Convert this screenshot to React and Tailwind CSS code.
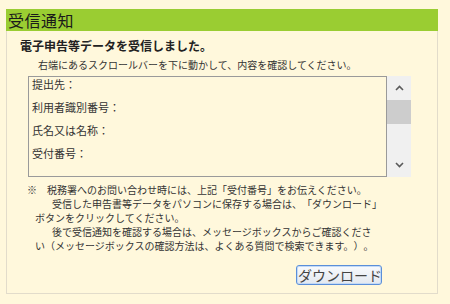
import React from 'react';

const FONT = "font-['Noto_Sans_CJK_JP','Noto_Sans',sans-serif] [text-spacing-trim:space-all]";

const FIELDS = ['提出先：', '利用者識別番号：', '氏名又は名称：', '受付番号：'];

function Chevron({ down }) {
  return (
    <svg width="9" height="6" viewBox="0 0 9 6" className={down ? 'rotate-180' : ''}>
      <path d="M1 5 L4.5 1.5 L8 5" fill="none" stroke="#5a5a5a" strokeWidth="1.6" />
    </svg>
  );
}

export default function App() {
  return (
    <div className={`w-[450px] h-[304px] bg-[#fff8dc] pt-[9px] pl-[6px] text-[#222] ${FONT}`}>
      <div className="w-[432px]">
        {/* header */}
        <div className="h-[22px] bg-[#9acd32] flex items-center pl-[2px] text-[16px] leading-none tracking-[0.5px] text-[#1a1a1a]">
          受信通知
        </div>

        {/* body */}
        <div className="h-[263px] border-x border-b border-[#e2dccb] flex flex-col">
          <div className="mt-[7px] pl-[13px] text-[12px] leading-[16px] font-bold">
            電子申告等データを受信しました。
          </div>
          <div className="mt-[4px] pl-[31px] text-[10px] leading-[14px] text-[#333]">
            右端にあるスクロールバーを下に動かして、内容を確認してください。
          </div>

          {/* message box */}
          <div className="mt-[4px] ml-[21px] flex h-[101px]">
            <div className="w-[359px] h-full border border-[#9a9a9a] overflow-hidden pl-[3px] flex flex-col gap-[9px] text-[11px] leading-[14px] text-[#333]">
              {FIELDS.map((f) => (
                <div key={f}>{f}</div>
              ))}
            </div>
            <div className="w-[24px] h-full bg-[#f0f0f0] flex flex-col">
              <div className="h-[24px] flex items-center justify-center">
                <Chevron />
              </div>
              <div className="h-[24px] bg-[#cdcdcd]" />
              <div className="flex-1" />
              <div className="h-[24px] flex items-center justify-center">
                <Chevron down />
              </div>
            </div>
          </div>

          {/* notes */}
          <div className="mt-[6px] text-[10px] leading-[14px] text-[#333] whitespace-nowrap">
            <div className="flex pl-[20px]">
              <span className="w-[20px]">※</span>
              <span>税務署へのお問い合わせ時には、上記「受付番号」をお伝えください。</span>
            </div>
            <div className="pl-[45px]">受信した申告書等データをパソコンに保存する場合は、「ダウンロード」</div>
            <div className="pl-[28px]">ボタンをクリックしてください。</div>
            <div className="pl-[45px]">後で受信通知を確認する場合は、メッセージボックスからご確認くださ</div>
            <div className="pl-[28px]">い（メッセージボックスの確認方法は、よくある質問で検索できます。）。</div>
          </div>

          <div className="mt-[9px] pl-[289px]">
            <button className="w-[86px] h-[20px] rounded-[3px] border border-[#5b8fd9] shadow-[inset_0_0_0_1px_#c4daf6] bg-gradient-to-b from-[#f8fafd] to-[#e3e8ef] overflow-hidden whitespace-nowrap text-left pl-[1px] text-[14px] leading-[18px] text-[#444]">
              ダウンロード
            </button>
          </div>
        </div>
      </div>
    </div>
  );
}
